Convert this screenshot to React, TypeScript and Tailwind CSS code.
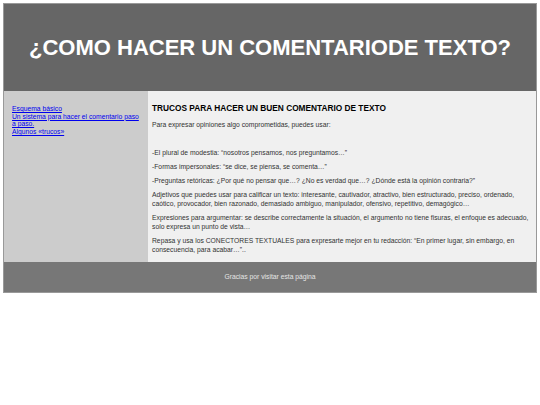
export default function App() {
  const parrafos = [
    "-El plural de modestia: “nosotros pensamos, nos preguntamos…”",
    "-Formas impersonales: “se dice, se piensa, se comenta…”",
    "-Preguntas retóricas: ¿Por qué no pensar que…? ¿No es verdad que…? ¿Dónde está la opinión contraria?”",
    "Adjetivos que puedes usar para calificar un texto: interesante, cautivador, atractivo, bien estructurado, preciso, ordenado, caótico, provocador, bien razonado, demasiado ambiguo, manipulador, ofensivo, repetitivo, demagógico…",
    "Expresiones para argumentar: se describe correctamente la situación, el argumento no tiene fisuras, el enfoque es adecuado, solo expresa un punto de vista…",
    "Repasa y usa los CONECTORES TEXTUALES para expresarte mejor en tu redacción: “En primer lugar, sin embargo, en consecuencia, para acabar…”..",
  ];

  return (
    <div className="min-h-[405px] bg-white p-[3px] font-['Liberation_Sans',Arial,sans-serif]">
      <div className="border border-[#999] bg-[#f0f0f0]">
        <header className="flex h-[87px] items-center justify-center bg-[#666]">
          <h1 className="text-[22px] font-bold text-white">¿COMO HACER UN COMENTARIODE TEXTO?</h1>
        </header>

        <div className="flex">
          <nav className="flex w-[144px] shrink-0 flex-col bg-[#ccc] pl-[8px] pr-[4px] py-[14px] text-[6.75px] leading-[7.7px]">
            <a href="#" className="text-[#00e] underline">Esquema básico</a>
            <a href="#" className="text-[#00e] underline">Un sistema para hacer el comentario paso a paso.</a>
            <a href="#" className="text-[#00e] underline">Algunos «trucos»</a>
          </nav>

          <main className="flex-1 px-[4px] pt-[13px] pb-[3px] text-[6.75px] leading-[9px] text-[#333]">
            <h2 className="mb-[7px] text-[8.3px] font-bold text-black">TRUCOS PARA HACER UN BUEN COMENTARIO DE TEXTO</h2>
            <p className="mb-[19px]">Para expresar opiniones algo comprometidas, puedes usar:</p>
            {parrafos.map((p) => (
              <p key={p} className="mb-[5px]">{p}</p>
            ))}
          </main>
        </div>

        <footer className="flex h-[30px] items-center justify-center bg-[#777] text-[6.75px] text-[#e5e5e5]">
          Gracias por visitar esta página
        </footer>
      </div>
    </div>
  );
}
